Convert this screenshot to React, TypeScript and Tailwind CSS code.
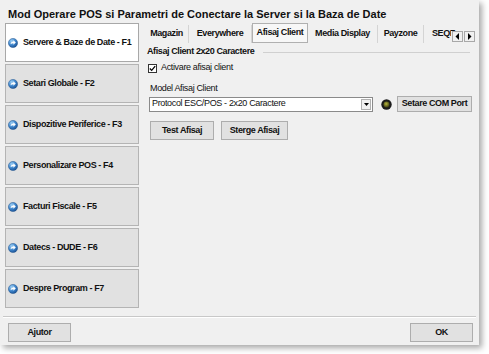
import React from 'react';

const font = { fontFamily: '"Liberation Sans", Arial, sans-serif' };

const GoIcon = () => (
  <svg width="10" height="10" viewBox="0 0 10 10" className="shrink-0">
    <defs>
      <radialGradient id="goG" cx="35%" cy="30%" r="75%">
        <stop offset="0" stopColor="#9fd0f5" />
        <stop offset="0.55" stopColor="#3d85cc" />
        <stop offset="1" stopColor="#1a4f92" />
      </radialGradient>
    </defs>
    <circle cx="5" cy="5" r="4.6" fill="url(#goG)" stroke="#24568f" strokeWidth="0.5" />
    <path d="M2.6 6.2 Q2.8 3.6 5.4 3.6 L5.4 2.3 L7.8 4.5 L5.4 6.7 L5.4 5.3 Q3.8 5.2 2.6 6.2 Z" fill="#ffffff" />
  </svg>
);

const menu = [
  'Servere & Baze de Date - F1',
  'Setari Globale - F2',
  'Dispozitive Periferice - F3',
  'Personalizare POS - F4',
  'Facturi Fiscale - F5',
  'Datecs - DUDE - F6',
  'Despre Program - F7',
];

const SideButton = ({ label, active }: { label: string; active?: boolean }) => (
  <div
    className={
      'h-[39px] flex items-center gap-[5px] pl-[2px] border ' +
      (active ? 'bg-white border-[#a8a8a8]' : 'bg-[#e1e1e1] border-[#b4b4b4]')
    }
  >
    <GoIcon />
    <span className="text-[9px] font-bold tracking-[-0.4px] text-[#111]">{label}</span>
  </div>
);

const Tab = ({ label, w }: { label: string; w: string }) => (
  <div className={`${w} h-[18px] mt-[2px] flex items-center justify-center border-r border-[#d4d4d4]`}>
    <span className="text-[9px] font-bold tracking-[-0.4px] text-[#111]">{label}</span>
  </div>
);

const Btn = ({ label, className }: { label: string; className: string }) => (
  <div className={`${className} flex items-center justify-center bg-[#e1e1e1] border border-[#adadad]`}>
    <span className="text-[9px] font-bold tracking-[-0.4px] text-[#111]">{label}</span>
  </div>
);

const Arrow = ({ dir }: { dir: 'l' | 'r' }) => (
  <div className="w-[11px] h-[11px] bg-[#f0f0f0] border border-[#a8a8a8] flex items-center justify-center">
    <svg width="5" height="7" viewBox="0 0 5 7">
      {dir === 'l' ? <path d="M4 0 L4 7 L0.5 3.5 Z" fill="#000" /> : <path d="M1 0 L1 7 L4.5 3.5 Z" fill="#000" />}
    </svg>
  </div>
);

export default function App() {
  return (
    <div className="w-[489px] h-[354px] bg-white" style={font}>
      <div className="w-[479px] h-[345px] bg-[#f0f0f0] flex flex-col shadow-[3px_3px_6px_rgba(0,0,0,0.35)]">
        <div className="pt-[7px] pl-[8px] h-[23px] text-[11px] leading-[14px] font-bold text-[#111]">
          Mod Operare POS si Parametri de Conectare la Server si la Baza de Date
        </div>

        <div className="flex h-[289px]">
          <div className="ml-[5px] w-[134px] flex flex-col gap-[2px]">
            {menu.map((m, i) => (
              <SideButton key={m} label={m} active={i === 0} />
            ))}
          </div>

          <div className="ml-[6px] w-[330px] flex flex-col">
            <div className="relative flex h-[20px]">
              <Tab label="Magazin" w="w-[44px]" />
              <Tab label="Everywhere" w="w-[63px]" />
              <div className="w-[56px] h-[20px] flex items-center justify-center bg-[#f7f7f7] border border-[#b0b0b0]">
                <span className="text-[9px] font-bold tracking-[-0.4px] text-[#111]">Afisaj Client</span>
              </div>
              <Tab label="Media Display" w="w-[70px]" />
              <Tab label="Payzone" w="w-[46px]" />
              <div className="h-[18px] mt-[2px] flex items-center pl-[8px]">
                <span className="text-[9px] font-bold tracking-[-0.4px] text-[#111] whitespace-nowrap">SEQF</span>
              </div>
              <div className="absolute left-[306px] top-[8px] flex h-[11px] gap-px bg-[#f0f0f0] pl-px">
                <Arrow dir="l" />
                <Arrow dir="r" />
              </div>
            </div>

            <div className="flex items-center mt-[3px] h-[12px] pl-[2px] pr-[5px]">
              <span className="text-[9px] font-bold tracking-[-0.4px] text-[#111] whitespace-nowrap">
                Afisaj Client 2x20 Caractere
              </span>
              <div className="flex-1 ml-[9px] h-px bg-[#d0d0d0]" />
            </div>

            <div className="flex items-center mt-[5px] h-[10px] pl-[3px] gap-[4px]">
              <div className="w-[9px] h-[9px] bg-white border border-[#333] flex items-center justify-center">
                <svg width="7" height="7" viewBox="0 0 7 7">
                  <path d="M0.8 3.5 L2.7 5.4 L6.2 1.2" stroke="#000" strokeWidth="1.3" fill="none" />
                </svg>
              </div>
              <span className="text-[9px] tracking-[-0.35px] text-[#111]">Activare afisaj client</span>
            </div>

            <div className="mt-[10px] pl-[5px] h-[11px] text-[9px] leading-[11px] tracking-[-0.35px] text-[#111]">
              Model Afisaj Client
            </div>

            <div className="flex items-center mt-[2px] pl-[4px] h-[16px]">
              <div className="w-[224px] h-[15px] bg-white border border-[#8a8a8a] flex items-center justify-between pl-[2px] pr-[1px]">
                <span className="text-[9px] tracking-[-0.35px] text-[#111]">Protocol ESC/POS - 2x20 Caractere</span>
                <div className="w-[10px] h-[11px] bg-[#f0f0f0] border border-[#b0b0b0] flex items-center justify-center">
                  <svg width="5" height="3" viewBox="0 0 5 3">
                    <path d="M0 0 L5 0 L2.5 3 Z" fill="#000" />
                  </svg>
                </div>
              </div>
              <svg width="11" height="11" viewBox="0 0 11 11" className="ml-[8px]">
                <defs>
                  <radialGradient id="led" cx="45%" cy="40%" r="60%">
                    <stop offset="0" stopColor="#b8b840" />
                    <stop offset="1" stopColor="#3c3c10" />
                  </radialGradient>
                </defs>
                <circle cx="5.5" cy="5.5" r="5.2" fill="#1c1c1c" />
                <circle cx="5.5" cy="5.5" r="3" fill="url(#led)" />
              </svg>
              <Btn label="Setare COM Port" className="ml-[5px] w-[75px] h-[16px]" />
            </div>

            <div className="flex mt-[9px] pl-[5px] gap-[7px]">
              <Btn label="Test Afisaj" className="w-[64px] h-[19px]" />
              <Btn label="Sterge Afisaj" className="w-[67px] h-[19px]" />
            </div>
          </div>
        </div>

        <div className="mt-[4px] mx-[3px] h-px bg-[#c8c8c8] border-b border-white box-content" />

        <div className="flex justify-between mt-[5px] px-[8px] pr-[6px]">
          <Btn label="Ajutor" className="w-[63px] h-[19px]" />
          <Btn label="OK" className="w-[63px] h-[19px]" />
        </div>
      </div>
    </div>
  );
}
